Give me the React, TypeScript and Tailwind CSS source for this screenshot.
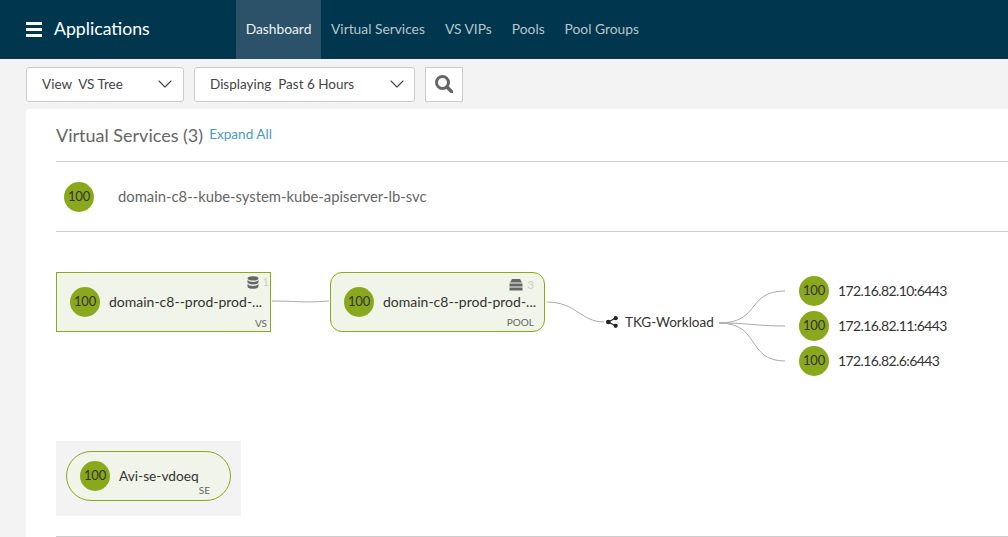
import React from 'react';
import { ChevronDown } from 'lucide-react';

const Score = () => (
  <div className="w-[30px] h-[30px] shrink-0 rounded-full bg-[#8aa81c] flex items-center justify-center text-[13px] tracking-[-0.2px] text-[#333]">
    100
  </div>
);

const DbIcon = () => (
  <svg width="12" height="13" viewBox="0 0 12 13" fill="#666">
    <ellipse cx="6" cy="2.4" rx="5.5" ry="2.2" />
    <path d="M.5 4c1 1.300 3 2 5.500 2s4.500-.7 5.500-2v2.200C11.500 7.500 9 8.400 6 8.400S.5 7.500.5 6.200z" />
    <path d="M.5 8c1 1.300 3 2 5.500 2s4.500-.7 5.500-2v2.400C11.500 11.800 9 12.800 6 12.800S.5 11.800.5 10.400z" />
  </svg>
);

const ServerIcon = () => (
  <svg width="14" height="12" viewBox="0 0 14 12" fill="#666">
    <path d="M3 0h8l2 3.500H1z" />
    <rect x="0.500" y="4.500" width="13" height="3" />
    <rect x="0.500" y="8.500" width="13" height="3" />
  </svg>
);

const ShareIcon = () => (
  <svg width="12" height="12" viewBox="0 0 12 12" fill="#222">
    <path d="M9.500 2 2.500 6l7 4" fill="none" stroke="#222" strokeWidth="1.200" />
    <circle cx="9.700" cy="2.200" r="2.100" />
    <circle cx="2.300" cy="6" r="2.300" />
    <circle cx="9.700" cy="9.800" r="2.100" />
  </svg>
);

const SearchIcon = () => (
  <svg width="18" height="18" viewBox="0 0 18 18" fill="none" stroke="#666">
    <circle cx="7.500" cy="7.500" r="6" strokeWidth="3" />
    <path d="M12 12l4.500 4.500" strokeWidth="3.500" strokeLinecap="round" />
  </svg>
);

const servers = [
  { ip: '172.16.82.10:6443', top: 'top-[44px]' },
  { ip: '172.16.82.11:6443', top: 'top-[79px]' },
  { ip: '172.16.82.6:6443', top: 'top-[114px]' },
];

export default function App() {
  const tabs = ['Virtual Services', 'VS VIPs', 'Pools', 'Pool Groups'];

  return (
    <div className="w-[1008px] h-[537px] overflow-hidden bg-[#f3f3f3] font-['Lato',sans-serif] text-[#333]">
      <header className="h-[59px] bg-[#00374f] flex items-center pl-[26px]">
        <div className="w-[16px] flex flex-col gap-[3px]">
          <div className="h-[3px] bg-white" />
          <div className="h-[3px] bg-white" />
          <div className="h-[3px] bg-white" />
        </div>
        <div className="ml-[12px] w-[182px] text-[17.700px] text-white">Applications</div>
        <nav className="flex h-full items-center text-[13.800px] text-[#b7c5cc]">
          <div className="h-full w-[85px] bg-[#2c5269] text-[#eef2f4] flex items-center justify-center pb-[1px]">Dashboard</div>
          <div className="flex gap-[20px] ml-[10px] pb-[1px]">
            {tabs.map((t) => (
              <span key={t}>{t}</span>
            ))}
          </div>
        </nav>
      </header>

      <div className="h-[50px] pl-[26px] flex items-center gap-[10px] text-[13.500px] text-[#444]">
        <div className="w-[158px] h-[35px] bg-white border border-[#ccc] rounded-[3px] flex items-center justify-between pl-[15px] pr-[6px]">
          <span className="whitespace-pre">View  VS Tree</span>
          <ChevronDown size={24} strokeWidth={1.100} />
        </div>
        <div className="w-[221px] h-[35px] bg-white border border-[#ccc] rounded-[3px] flex items-center justify-between pl-[15px] pr-[5px]">
          <span className="whitespace-pre">Displaying  Past 6 Hours</span>
          <ChevronDown size={24} strokeWidth={1.100} />
        </div>
        <div className="w-[38px] h-[35px] bg-white border border-[#ccc] flex items-center justify-center">
          <SearchIcon />
        </div>
      </div>

      <main className="ml-[26px] h-[428px] bg-white pl-[30px] rounded-tl-[3px]">
        <div className="h-[53px] border-b border-[#ccc] flex items-center gap-[6px]">
          <h1 className="text-[18px] text-[#666]">Virtual Services (3)</h1>
          <a className="text-[13.600px] text-[#4a9bc9] -mt-[2px]">Expand All</a>
        </div>
        <div className="h-[70px] border-b border-[#ccc] flex items-center pl-[8px] gap-[24px] text-[14.800px] text-[#666]">
          <Score />
          <span>domain-c8--kube-system-kube-apiserver-lb-svc</span>
        </div>

        <div className="relative h-[305px] border-b border-[#ccc] text-[14px] text-[#333]">
          {/* diagram canvas, origin at x=56 y=232 */}
          <svg className="absolute left-0 top-0" width="952" height="200" fill="none" stroke="#aaa" strokeWidth="1">
            <path d="M216 69C240 69 245 71 273 69" />
            <path d="M491 70C520 70 525 90 548 90" />
            <path d="M663 91C705 91 690 59 729 59" />
            <path d="M663 91C695 91 700 94 729 94" />
            <path d="M663 91C705 91 690 129 729 129" />
          </svg>

          <div className="absolute left-0 top-[40px] w-[215px] h-[60px] bg-[#f1f4e8] border border-[#8aa81c] flex items-center pl-[13px] gap-[9px]">
            <Score />
            <span className="-mt-[1px]">domain-c8--prod-prod-...</span>
            <div className="absolute right-[1px] top-[1px] flex items-center gap-[4px] text-[11px] text-[#ccc]">
              <DbIcon />
              <span>1</span>
            </div>
            <span className="absolute right-[3px] bottom-0 text-[10px] text-[#666]">VS</span>
          </div>

          <div className="absolute left-[274px] top-[40px] w-[215px] h-[60px] bg-[#f1f4e8] border border-[#8aa81c] rounded-[12px] flex items-center pl-[13px] gap-[9px]">
            <Score />
            <span className="-mt-[1px]">domain-c8--prod-prod-...</span>
            <div className="absolute right-[10px] top-[4px] flex items-center gap-[5px] text-[11px] text-[#ccc]">
              <ServerIcon />
              <span>3</span>
            </div>
            <span className="absolute right-[10px] bottom-[1px] text-[10px] text-[#666]">POOL</span>
          </div>

          <div className="absolute left-[550px] top-[80px] flex items-center gap-[7px] text-[13.500px]">
            <ShareIcon />
            <span>TKG-Workload</span>
          </div>

          {servers.map((s) => (
            <div key={s.ip} className={`absolute left-[743px] ${s.top} flex items-center gap-[9px]`}>
              <Score />
              <span className="tracking-[-0.6px] -mt-[1px]">{s.ip}</span>
            </div>
          ))}

          <div className="absolute left-0 top-[209px] w-[185px] h-[75px] bg-[#f3f3f3] flex items-start justify-center pt-[10px]">
            <div className="relative w-[165px] h-[50px] bg-[#f1f4e8] border border-[#8aa81c] rounded-full flex items-center pl-[13px] gap-[9px]">
              <Score />
              <span className="text-[13.700px] mt-[1px]">Avi-se-vdoeq</span>
              <span className="absolute right-[20px] bottom-[2px] text-[10px] text-[#666]">SE</span>
            </div>
          </div>
        </div>
      </main>
    </div>
  );
}
